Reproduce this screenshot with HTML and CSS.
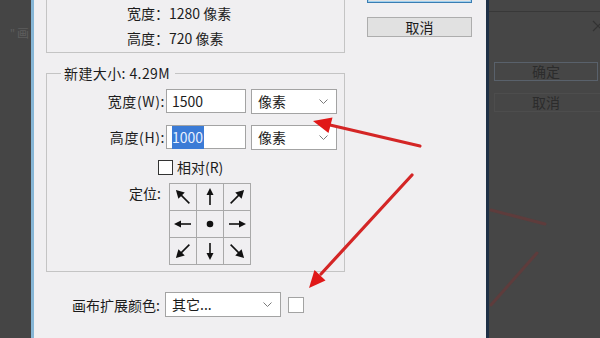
FILE: index.html
```html
<!DOCTYPE html>
<html lang="zh-CN">
<head>
<meta charset="utf-8">
<title>画布大小</title>
<link rel="stylesheet" href="styles.css">
</head>
<body>
<div class="strip"><span class="ghost"><span class="q">"</span>画</span></div>

<div class="dialog">
  <div class="main">
    <div class="cur-box">
      <div class="cur-row"><span class="k">宽度：</span><span class="v">1280 像素</span></div>
      <div class="cur-row"><span class="k">高度：</span><span class="v">720 像素</span></div>
    </div>

    <fieldset class="newsize">
      <legend>新建大小: 4.29M</legend>
      <div class="row">
        <span class="lbl">宽度(W):</span>
        <div class="input">1500</div>
        <div class="select"><span>像素</span><svg class="chev" width="9" height="5" viewBox="0 0 9 5"><polyline points="0.5,0.5 4.5,4.5 8.5,0.5" fill="none" stroke="#7a7a7a" stroke-width="1"/></svg></div>
      </div>
      <div class="row row2">
        <span class="lbl">高度(H):</span>
        <div class="input"><span class="sel">1000</span></div>
        <div class="select"><span>像素</span><svg class="chev" width="9" height="5" viewBox="0 0 9 5"><polyline points="0.5,0.5 4.5,4.5 8.5,0.5" fill="none" stroke="#7a7a7a" stroke-width="1"/></svg></div>
      </div>
      <div class="check-row">
        <span class="box"></span><span>相对(R)</span>
      </div>
      <div class="anchor-row">
        <span class="alb">定位:</span>
        <div class="grid">
          <div class="cell"><svg viewBox="0 0 26 26"><g transform="rotate(-45 13 13)"><line x1="13" y1="22" x2="13" y2="9" class="sh"/><polygon points="13,3 8.5,11 17.5,11"/></g></svg></div>
          <div class="cell"><svg viewBox="0 0 26 26"><g><line x1="13" y1="21" x2="13" y2="9" class="sh"/><polygon points="13,4 9.5,11 16.5,11"/></g></svg></div>
          <div class="cell"><svg viewBox="0 0 26 26"><g transform="rotate(45 13 13)"><line x1="13" y1="22" x2="13" y2="9" class="sh"/><polygon points="13,3 8.5,11 17.5,11"/></g></svg></div>
          <div class="cell"><svg viewBox="0 0 26 26"><g transform="rotate(-90 13 13)"><line x1="13" y1="21" x2="13" y2="9" class="sh"/><polygon points="13,4 9.5,11 16.5,11"/></g></svg></div>
          <div class="cell"><svg viewBox="0 0 26 26"><circle cx="13" cy="13" r="3.3"/></svg></div>
          <div class="cell"><svg viewBox="0 0 26 26"><g transform="rotate(90 13 13)"><line x1="13" y1="21" x2="13" y2="9" class="sh"/><polygon points="13,4 9.5,11 16.5,11"/></g></svg></div>
          <div class="cell"><svg viewBox="0 0 26 26"><g transform="rotate(-135 13 13)"><line x1="13" y1="22" x2="13" y2="9" class="sh"/><polygon points="13,3 8.5,11 17.5,11"/></g></svg></div>
          <div class="cell"><svg viewBox="0 0 26 26"><g transform="rotate(180 13 13)"><line x1="13" y1="21" x2="13" y2="9" class="sh"/><polygon points="13,4 9.5,11 16.5,11"/></g></svg></div>
          <div class="cell"><svg viewBox="0 0 26 26"><g transform="rotate(135 13 13)"><line x1="13" y1="22" x2="13" y2="9" class="sh"/><polygon points="13,3 8.5,11 17.5,11"/></g></svg></div>
        </div>
      </div>
    </fieldset>

    <div class="ext-row">
      <span class="elb">画布扩展颜色:</span>
      <div class="select wide"><span>其它...</span><svg class="chev" width="9" height="5" viewBox="0 0 9 5"><polyline points="0.5,0.5 4.5,4.5 8.5,0.5" fill="none" stroke="#7a7a7a" stroke-width="1"/></svg></div>
      <span class="swatch"></span>
    </div>
  </div>

  <div class="buttons">
    <div class="btn primary">确定</div>
    <div class="btn">取消</div>
  </div>
</div>

<div class="rpanel">
  <div class="rp-top"></div>
  <div class="rp-close"><svg width="12" height="12" viewBox="0 0 12 12"><path d="M1 1 L11 11 M11 1 L1 11" stroke="#333" stroke-width="1.2"/></svg></div>
  <div class="rbtn ok">确定</div>
  <div class="rbtn cancel">取消</div>
</div>

<svg class="arrows" width="600" height="338" viewBox="0 0 600 338">
  <line x1="420" y1="146" x2="330" y2="125" stroke="#d42626" stroke-width="3.2" stroke-linecap="round"/>
  <polygon points="313,121 332.5,117.5 328.5,133" fill="#e01818"/>
  <line x1="412" y1="175" x2="321" y2="274" stroke="#d42626" stroke-width="3.2" stroke-linecap="round"/>
  <polygon points="309,288 314.5,270 325.5,280.5" fill="#e01818"/>
  <line x1="491" y1="210" x2="545" y2="224" stroke="#5e3c3c" stroke-width="3" stroke-linecap="round"/>
  <line x1="537" y1="253" x2="491" y2="305" stroke="#5e3c3c" stroke-width="3" stroke-linecap="round"/>
</svg>
</body>
</html>
```

FILE: styles.css
```css
html, body {
  margin: 0;
  padding: 0;
}
body {
  position: relative;
  width: 600px;
  height: 338px;
  overflow: hidden;
  display: flex;
  background: #464646;
  font-family: "Noto Sans CJK SC", "Noto Sans", sans-serif;
  font-size: 14px;
  color: #1c1c1c;
}
.strip {
  width: 31px;
  flex: none;
  overflow: hidden;
  background: #454545;
  white-space: nowrap;
}
.ghost {
  display: block;
  padding: 25px 0 0 10px;
  color: #5d5d5d;
  font-size: 12px;
  line-height: 16px;
}
.ghost .q {
  font-family: "Noto Sans", sans-serif;
  margin-right: 2px;
}
.dialog {
  width: 440px;
  flex: none;
  background: #f0eff1;
  border-left: 3px solid #86b6d6;
  border-right: 3px solid #1e3046;
  display: flex;
  padding-left: 12px;
  box-sizing: content-box;
}
.main {
  width: 299px;
  display: flex;
  flex-direction: column;
}
.cur-box {
  border: 1px solid #c4c4c4;
  border-top: none;
  padding: 1px 0 0 80px;
  box-sizing: content-box;
  height: 51px;
}
.cur-row {
  line-height: 25px;
  height: 25px;
  white-space: nowrap;
}
.newsize {
  margin: 12px 0 0 0;
  padding: 8px 0 6px 0;
  border: 1px solid #c4c4c4;
  min-inline-size: 0;
  width: 299px;
  box-sizing: border-box;
}
.newsize legend {
  margin-left: 14px;
  padding: 0 5px 0 3px;
  line-height: 16px;
  font-size: 14px;
  letter-spacing: 0.4px;
}
.row {
  display: flex;
  align-items: center;
  height: 24px;
}
.row2 {
  margin-top: 12px;
}
.lbl {
  width: 118px;
  text-align: right;
  white-space: nowrap;
  letter-spacing: 0.6px;
}
.input {
  width: 80px;
  height: 24px;
  margin-left: 1px;
  box-sizing: border-box;
  border: 1px solid #a3a3a3;
  background: #fff;
  padding-left: 5px;
  line-height: 22px;
}
.sel {
  background: #3b7bd6;
  color: #e8f0ff;
  padding: 1px 1px 2px 0;
}
.select {
  width: 86px;
  height: 25px;
  margin-left: 5px;
  box-sizing: border-box;
  border: 1px solid #a3a3a3;
  background: #fff;
  padding: 0 8px 0 6px;
  display: flex;
  align-items: center;
  justify-content: space-between;
  line-height: 23px;
}
.check-row {
  display: flex;
  align-items: center;
  margin-top: 10px;
  padding-left: 111px;
  height: 16px;
}
.box {
  width: 15px;
  height: 15px;
  box-sizing: border-box;
  border: 1px solid #333;
  background: #fff;
  margin-right: 4px;
}
.anchor-row {
  display: flex;
  margin-top: 8px;
}
.alb {
  width: 114px;
  text-align: right;
  line-height: 20px;
}
.grid {
  margin-left: 8px;
  display: grid;
  grid-template-columns: repeat(3, 26px);
  grid-auto-rows: 26px;
  gap: 1px;
  padding: 1px;
  background: #a9a9a9;
}
.cell {
  background: #f0eff1;
}
.cell svg {
  display: block;
  width: 26px;
  height: 26px;
  fill: #111;
}
.cell .sh {
  stroke: #111;
  stroke-width: 1.6;
}
.ext-row {
  display: flex;
  align-items: center;
  margin-top: 20px;
  padding-left: 26px;
}
.elb {
  width: 93px;
  white-space: nowrap;
}
.select.wide {
  width: 116px;
  margin-left: 0;
}
.swatch {
  width: 16px;
  height: 16px;
  margin-left: 7px;
  box-sizing: border-box;
  border: 1px solid #a3a3a3;
  background: #fff;
}
.buttons {
  margin-left: 22px;
  width: 105px;
  display: flex;
  flex-direction: column;
}
.btn {
  height: 20px;
  box-sizing: border-box;
  border: 1px solid #adadad;
  background: #e1e1e1;
  text-align: center;
  line-height: 18px;
}
.btn.primary {
  margin-top: -18px;
  height: 21px;
  border: 1px solid #3a7db2;
  box-shadow: inset 0 0 0 1px #9fd0ef;
}
.btn + .btn {
  margin-top: 14px;
}
.rpanel {
  flex: 1;
  background: #464646;
  overflow: hidden;
  display: flex;
  flex-direction: column;
}
.rp-top {
  height: 11px;
  border-bottom: 1px solid #383838;
  flex: none;
}
.rp-close {
  display: flex;
  justify-content: flex-end;
  margin: 8px -4px 0 0;
  height: 12px;
}
.rbtn {
  margin-left: 5px;
  height: 19px;
  box-sizing: border-box;
  line-height: 17px;
  text-align: center;
  color: #2c2c2c;
  white-space: nowrap;
}
.rbtn.ok {
  width: 104px;
  margin-top: 30px;
  border: 1px solid #59616b;
}
.rbtn.cancel {
  width: 110px;
  margin-top: 12px;
  border: 1px solid #4d4d4d;
  text-indent: -6px;
}
.arrows {
  position: absolute;
  left: 0;
  top: 0;
  pointer-events: none;
}
```
